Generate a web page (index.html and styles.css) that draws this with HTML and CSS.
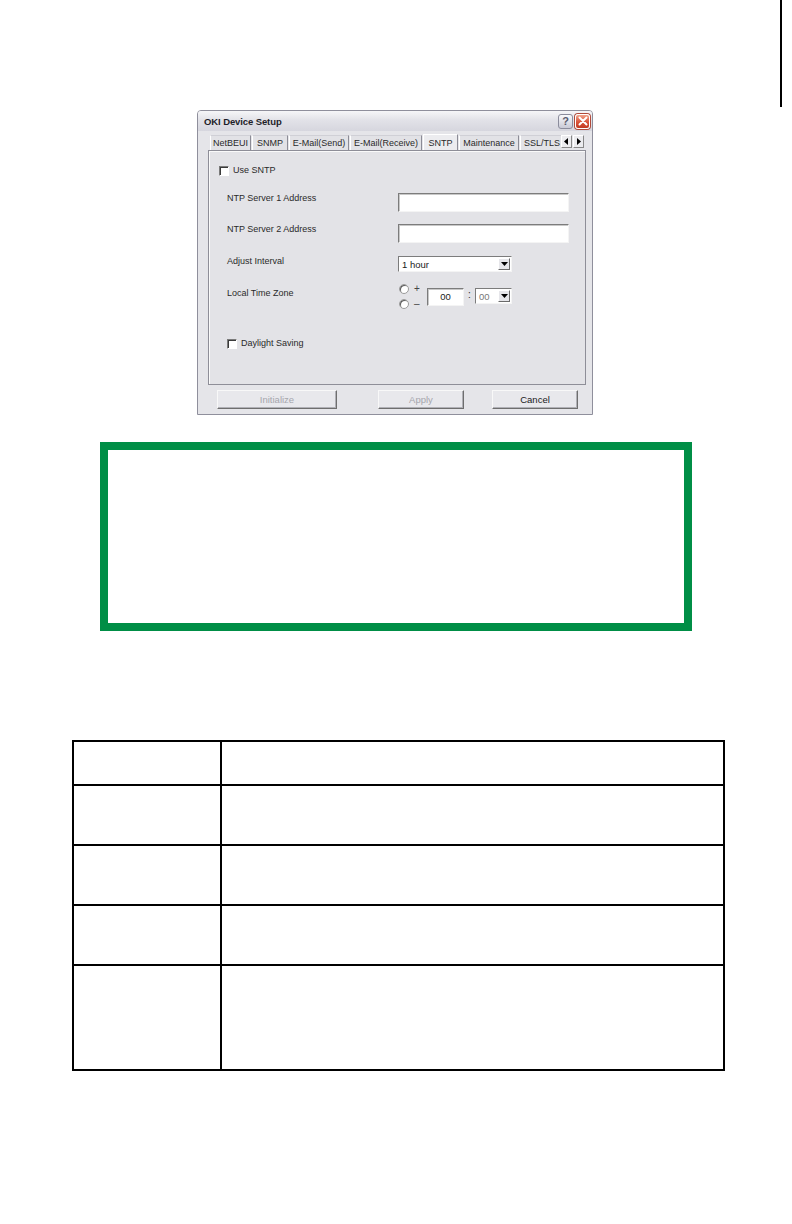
FILE: index.html
```html
<!DOCTYPE html>
<html>
<head>
<meta charset="utf-8">
<link rel="stylesheet" href="styles.css">
</head>
<body>
<div class="page">
  <div class="edge-mark"></div>
  <div class="dialog">
    <div class="titlebar">
      <span class="title">OKI Device Setup</span>
      <span class="tb-btn help">?</span>
      <span class="tb-btn close"><svg width="10" height="10" viewBox="0 0 10 10"><path d="M1.5 1.5 L8.5 8.5 M8.5 1.5 L1.5 8.5" stroke="#fff" stroke-width="2" stroke-linecap="round"/></svg></span>
    </div>
    <div class="tabstrip">
      <div class="tabs">
        <span class="tab t-netbeui">NetBEUI</span>
        <span class="tab t-snmp">SNMP</span>
        <span class="tab t-send">E-Mail(Send)</span>
        <span class="tab t-recv">E-Mail(Receive)</span>
        <span class="tab t-sntp active">SNTP</span>
        <span class="tab t-maint">Maintenance</span>
        <span class="tab t-ssl">SSL/TLS</span>
      </div>
      <span class="arrow"><svg width="5" height="7" viewBox="0 0 5 7"><path d="M4 0 L0 3.5 L4 7 Z" fill="#000"/></svg></span>
      <span class="arrow"><svg width="5" height="7" viewBox="0 0 5 7"><path d="M1 0 L5 3.5 L1 7 Z" fill="#000"/></svg></span>
    </div>
    <div class="panel">
      <div class="check-row use-sntp"><span class="checkbox"></span><span>Use SNTP</span></div>
      <div class="row r1"><span class="lbl">NTP Server 1 Address</span><span class="field text"></span></div>
      <div class="row r2"><span class="lbl">NTP Server 2 Address</span><span class="field text"></span></div>
      <div class="row r3"><span class="lbl">Adjust Interval</span><span class="select wide"><span class="sel-val">1 hour</span><span class="drop"><svg width="7" height="4" viewBox="0 0 7 4"><path d="M0 0 H7 L3.5 4 Z" fill="#000"/></svg></span></span></div>
      <div class="row r4">
        <span class="lbl tz-lbl">Local Time Zone</span>
        <div class="tz">
          <div class="radios">
            <div class="radio-row"><span class="radio"></span><span class="sign">+</span></div>
            <div class="radio-row"><span class="radio"></span><span class="sign">–</span></div>
          </div>
          <span class="field hour">00</span>
          <span class="colon">:</span>
          <span class="select small"><span class="sel-val dim">00</span><span class="drop"><svg width="7" height="4" viewBox="0 0 7 4"><path d="M0 0 H7 L3.5 4 Z" fill="#000"/></svg></span></span>
        </div>
      </div>
      <div class="check-row daylight"><span class="checkbox"></span><span>Daylight Saving</span></div>
    </div>
    <div class="buttons">
      <span class="btn b-init disabled">Initialize</span>
      <span class="btn b-apply disabled">Apply</span>
      <span class="btn b-cancel">Cancel</span>
    </div>
  </div>
  <div class="note"></div>
  <table class="grid">
    <tr class="h1"><td class="c1"></td><td></td></tr>
    <tr class="h2"><td class="c1"></td><td></td></tr>
    <tr class="h2"><td class="c1"></td><td></td></tr>
    <tr class="h2"><td class="c1"></td><td></td></tr>
    <tr class="h3"><td class="c1"></td><td></td></tr>
  </table>
</div>
</body>
</html>
```
FILE: styles.css
```css
html, body { margin: 0; padding: 0; background: #fff; }
.page {
  position: relative;
  width: 792px;
  height: 1224px;
  overflow: hidden;
  font-family: "Liberation Sans", Arial, sans-serif;
}
.edge-mark {
  position: absolute;
  left: 780px;
  top: 0;
  width: 2px;
  height: 107px;
  background: #000;
}
.dialog {
  width: 396px;
  height: 305px;
  margin: 110px 0 0 197px;
  box-sizing: border-box;
  border: 1px solid #8f8f9c;
  border-radius: 4px 4px 0 0;
  background: #e5e5e9;
  font-size: 9px;
  color: #2a2a2a;
  display: flex;
  flex-direction: column;
}
.titlebar {
  height: 20px;
  display: flex;
  align-items: center;
  padding: 0 2px 0 6px;
  background: linear-gradient(#f6f6f8, #e2e2e8 45%, #d6d6de 100%);
  border-radius: 3px 3px 0 0;
}
.title {
  font-weight: bold;
  font-size: 9.5px;
  color: #1e1e2a;
  flex: 1;
  letter-spacing: -0.1px;
}
.tb-btn {
  width: 15px;
  height: 15px;
  box-sizing: border-box;
  border-radius: 3px;
  display: flex;
  align-items: center;
  justify-content: center;
  margin-left: 2px;
}
.help {
  background: linear-gradient(#fafafc, #c9cad6);
  border: 1px solid #8b8c9c;
  color: #5a5c70;
  font-weight: bold;
  font-size: 11px;
}
.close {
  background: linear-gradient(#f1a48c, #d9533a 55%, #c23b22);
  border: 1px solid #fff;
  box-shadow: 0 0 0 1px #b04a3a;
}
.tabstrip {
  margin-top: 2px;
  height: 17px;
  display: flex;
  align-items: flex-end;
  padding-left: 12px;
}
.tabs {
  width: 351px;
  height: 17px;
  overflow: hidden;
  display: flex;
  align-items: flex-end;
  white-space: nowrap;
}
.tab {
  flex: none;
  height: 15px;
  box-sizing: border-box;
  line-height: 14px;
  text-align: center;
  border-left: 1px solid #ffffff;
  border-right: 1px solid #8c8c96;
  border-top: 1px solid #d0d0d6;
  background: #e2e2e6;
  margin-right: 1px;
  color: #2a2a2a;
}
.tab.active {
  height: 17px;
  line-height: 16px;
  background: #ececef;
  border-top: 1px solid #ffffff;
  margin-bottom: -1px;
  position: relative;
  z-index: 1;
}
.t-netbeui { width: 41px; }
.t-snmp { width: 36px; }
.t-send { width: 60px; }
.t-recv { width: 72px; }
.t-sntp { width: 35px; }
.t-maint { width: 60px; }
.t-ssl { width: 44px; text-align: left; padding-left: 3px; }
.arrow {
  width: 11px;
  height: 13px;
  box-sizing: border-box;
  margin: 0 1px 2px 0;
  background: #ececef;
  border: 1px solid #fff;
  border-right-color: #888;
  border-bottom-color: #888;
  display: flex;
  align-items: center;
  justify-content: center;
}
.panel {
  margin: 0 6px 0 10px;
  height: 235px;
  box-sizing: border-box;
  border: 1px solid #8e8e98;
  box-shadow: inset 1px 1px 0 #fafafa;
  background: #e3e3e7;
  padding: 14px 0 0 10px;
  display: flex;
  flex-direction: column;
}
.check-row {
  display: flex;
  align-items: center;
  height: 11px;
  line-height: 11px;
}
.checkbox {
  width: 10px;
  height: 10px;
  box-sizing: border-box;
  background: #fff;
  border: 1px solid #fff;
  border-top-color: #7a7a7a;
  border-left-color: #7a7a7a;
  box-shadow: inset 1px 1px 0 #3a3a3a;
  margin-right: 4px;
}
.daylight { margin: 29px 0 0 8px; }
.row {
  display: flex;
  align-items: flex-start;
  padding-left: 8px;
}
.lbl {
  width: 171px;
  flex: none;
  line-height: 11px;
}
.r1 { margin-top: 17px; }
.r2 { margin-top: 12px; }
.r3 { margin-top: 13px; }
.r4 { margin-top: 11px; }
.tz-lbl { padding-top: 5px; }
.field {
  display: block;
  box-sizing: border-box;
  background: #fff;
  border: 1px solid #f4f4f4;
  border-top: 1px solid #7c7c7c;
  border-left: 1px solid #7c7c7c;
  box-shadow: inset 1px 1px 0 #c8c8c8;
}
.field.text { width: 171px; height: 19px; }
.select {
  display: flex;
  align-items: center;
  box-sizing: border-box;
  background: #fff;
  border: 1px solid #f4f4f4;
  border-top: 1px solid #7c7c7c;
  border-left: 1px solid #7c7c7c;
  height: 16px;
  padding: 1px;
}
.select.wide { width: 114px; }
.select.small { width: 37px; }
.sel-val { flex: 1; padding-left: 2px; font-size: 9.5px; color: #1a1a1a; }
.sel-val.dim { color: #777; }
.drop {
  width: 12px;
  height: 12px;
  box-sizing: border-box;
  background: #e6e6ea;
  border: 1px solid #fff;
  border-right-color: #6a6a6a;
  border-bottom-color: #6a6a6a;
  display: flex;
  align-items: center;
  justify-content: center;
}
.tz {
  display: flex;
  align-items: center;
  height: 26px;
}
.radios {
  display: flex;
  flex-direction: column;
  gap: 4px;
  width: 29px;
}
.radio-row {
  display: flex;
  align-items: center;
  height: 11px;
}
.radio {
  width: 8px;
  height: 8px;
  border-radius: 50%;
  background: #fff;
  border: 1px solid #9a9a9a;
  box-shadow: inset 1px 1px 0 #5a5a5a;
  margin: 0 5px 0 1px;
}
.sign { font-size: 10px; color: #444; }
.field.hour {
  width: 37px;
  height: 18px;
  line-height: 16px;
  text-align: center;
  font-size: 9.5px;
  color: #1a1a1a;
  margin-top: 1px;
}
.colon { width: 11px; text-align: center; font-size: 10px; margin-top: -4px; }
.buttons {
  display: flex;
  margin: 5px 0 0 19px;
  height: 19px;
}
.btn {
  height: 19px;
  box-sizing: border-box;
  display: flex;
  align-items: center;
  justify-content: center;
  background: #e8e8ec;
  border: 1px solid #f8f8f8;
  border-right-color: #6e6e6e;
  border-bottom-color: #6e6e6e;
  box-shadow: inset -1px -1px 0 #b0b0b6;
  font-size: 9.5px;
  color: #1a1a1a;
}
.btn.disabled { color: #a6a6ac; }
.b-init { width: 120px; }
.b-apply { width: 86px; margin-left: 41px; }
.b-cancel { width: 86px; margin-left: 28px; }
.note {
  margin: 27px 0 0 100px;
  width: 592px;
  height: 189px;
  box-sizing: border-box;
  border: 8px solid #008e46;
}
.grid {
  margin: 109px 0 0 72px;
  width: 653px;
  border-collapse: collapse;
  border: 2px solid #000;
}
.grid td {
  border: 2px solid #000;
  padding: 0;
}
.grid .c1 { width: 146px; }
.h1 td { height: 42px; }
.h2 td { height: 58px; }
.h3 td { height: 103px; }
```
